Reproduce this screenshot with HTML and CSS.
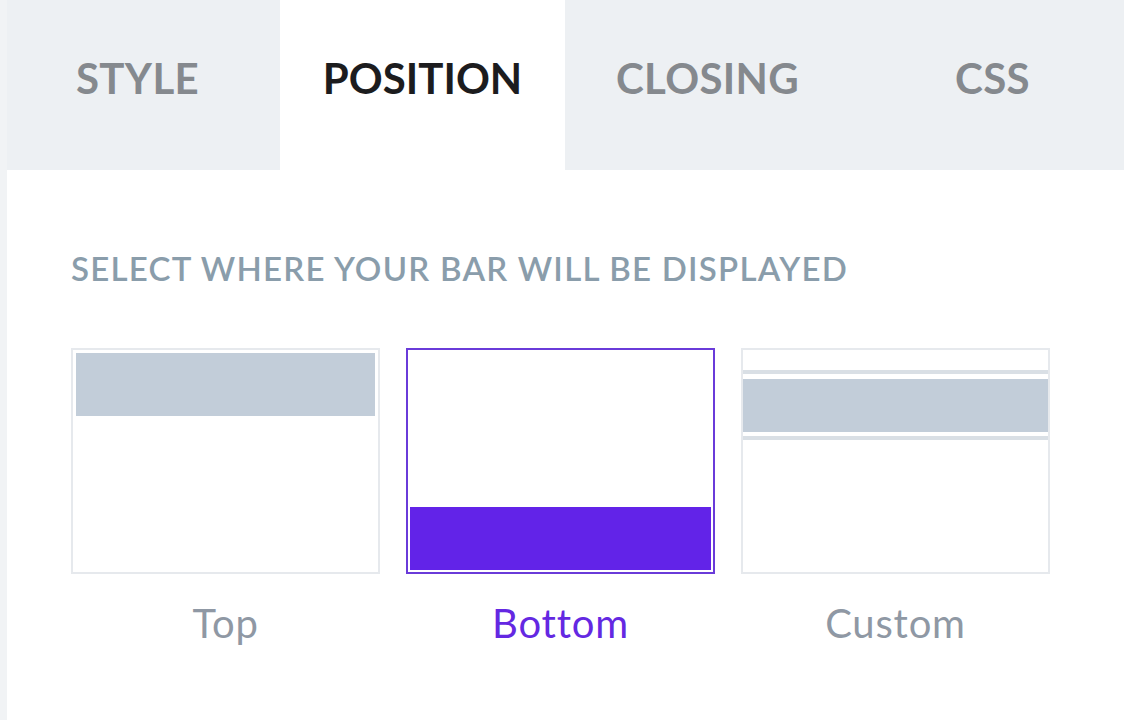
FILE: index.html
```html
<!DOCTYPE html>
<html lang="en">
<head>
<meta charset="utf-8">
<title>Bar position</title>
<link rel="stylesheet" href="styles.css">
</head>
<body>
<div class="page">
  <div class="strip"></div>
  <main class="main">
    <nav class="tabs">
      <div class="tab tab-first">STYLE</div>
      <div class="tab tab-active">POSITION</div>
      <div class="tab">CLOSING</div>
      <div class="tab">CSS</div>
    </nav>
    <section class="content">
      <h2 class="section-label">SELECT WHERE YOUR BAR WILL BE DISPLAYED</h2>
      <div class="options">
        <div class="option">
          <div class="card card-top">
            <div class="bar bar-gray"></div>
          </div>
          <div class="option-label">Top</div>
        </div>
        <div class="option option-selected">
          <div class="card card-bottom">
            <div class="bar bar-purple"></div>
          </div>
          <div class="option-label">Bottom</div>
        </div>
        <div class="option">
          <div class="card card-custom">
            <div class="rule"></div>
            <div class="bar bar-gray bar-custom"></div>
            <div class="rule"></div>
          </div>
          <div class="option-label">Custom</div>
        </div>
      </div>
    </section>
  </main>
</div>
</body>
</html>
```

FILE: styles.css
```css
* { box-sizing: border-box; }

html, body {
  margin: 0;
  padding: 0;
  background: #ffffff;
  font-family: Lato, "Liberation Sans", sans-serif;
}

.page {
  display: flex;
  width: 1124px;
  height: 720px;
  overflow: hidden;
}

.strip {
  flex: 0 0 7px;
  background: #f1f3f5;
}

.main {
  flex: 1 1 auto;
  min-width: 0;
}

.tabs {
  display: flex;
  height: 170px;
}

.tab {
  flex: 0 0 285px;
  height: 170px;
  padding-top: 57px;
  background: #edf0f3;
  color: #85898e;
  font-size: 42px;
  line-height: 42px;
  font-weight: 700;
  letter-spacing: 0.3px;
  text-align: center;
}

.tab-first {
  flex-basis: 273px;
  padding-right: 12px;
}

.tab-active {
  background: #ffffff;
  color: #1c1c1e;
  letter-spacing: 0;
}

.content {
  padding: 82px 0 0 64px;
}

.section-label {
  margin: 0;
  font-size: 33px;
  line-height: 32px;
  font-weight: 600;
  color: #8a9dab;
  letter-spacing: 1.25px;
  white-space: nowrap;
}

.options {
  display: grid;
  grid-template-columns: 309px 309px 309px;
  column-gap: 26px;
  margin-top: 64px;
}

.option {
  display: flex;
  flex-direction: column;
  align-items: stretch;
}

.card {
  height: 226px;
  background: #ffffff;
  border: 2px solid #e6e9ed;
  display: flex;
  flex-direction: column;
}

.card-top {
  padding: 3px;
}

.card-bottom {
  border-color: #6a3bd9;
  padding: 2px;
  justify-content: flex-end;
}

.card-custom {
  padding: 20px 0 0;
}

.bar {
  height: 63px;
}

.bar-gray {
  background: #c2cdd9;
}

.bar-purple {
  background: #6223e8;
}

.bar-custom {
  height: 53px;
  margin: 5px 0 4px;
}

.rule {
  height: 4px;
  background: #d9dfe5;
}

.option-label {
  margin-top: 26px;
  text-align: center;
  font-size: 40px;
  line-height: 47px;
  font-weight: 400;
  letter-spacing: 0.8px;
  color: #8f98a4;
}

.option-selected .option-label {
  color: #6428e2;
}
```
